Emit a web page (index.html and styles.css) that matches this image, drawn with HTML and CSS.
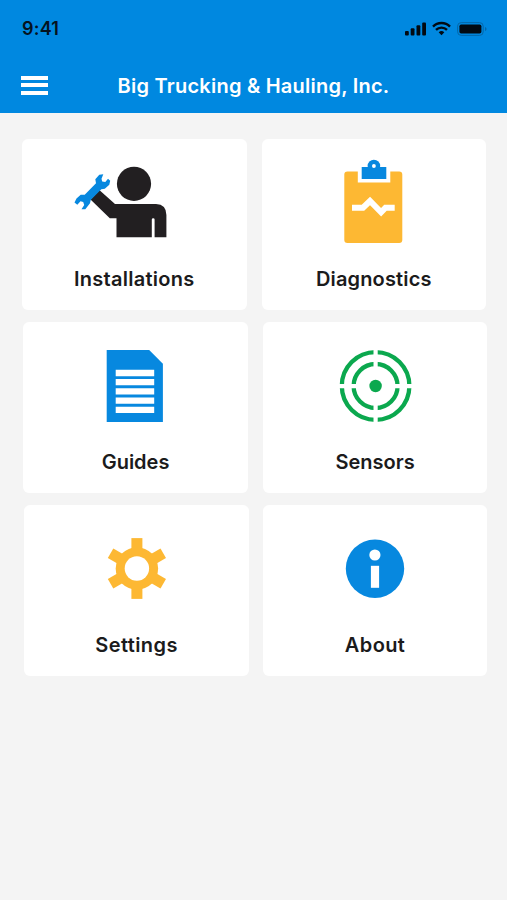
FILE: index.html
```html
<!DOCTYPE html>
<html lang="en">
<head>
<meta charset="utf-8">
<title>Big Trucking &amp; Hauling, Inc.</title>
<link rel="stylesheet" href="styles.css">
</head>
<body>
<header class="header">
  <div class="status">
    <span class="time">9:41</span>
    <svg class="indicators" viewBox="404 20 84 18">
      <rect x="405" y="31" width="3.8" height="4.6" rx="1"/>
      <rect x="410.7" y="28.3" width="3.8" height="7.3" rx="1"/>
      <rect x="416.5" y="25.3" width="3.8" height="10.3" rx="1"/>
      <rect x="422.2" y="22.5" width="3.8" height="13.1" rx="1"/>
      <g class="wave">
        <path d="M433 26.6a12 12 0 0 1 17 0"/>
        <path d="M436 29.9a7.8 7.8 0 0 1 11 0"/>
      </g>
      <path d="M438.7 32.3a4.2 4.2 0 0 1 5.6 0L441.5 35.3z"/>
      <rect class="shell" x="457.6" y="22.6" width="25.6" height="12.8" rx="3.6"/>
      <rect x="459.4" y="24.4" width="22" height="9.2" rx="1.8"/>
      <path class="cap" d="M485 27v4q1.6-.6 1.6-2T485 27z"/>
    </svg>
  </div>
  <div class="bar">
    <button class="menu" aria-label="Menu"><span></span><span></span><span></span></button>
    <h1 class="title">Big Trucking &amp; Hauling, Inc.</h1>
  </div>
</header>
<main class="rows">
  <div class="row row-first">
    <a class="card">
      <svg class="icon" viewBox="22 139 224 120">
        <g class="ink">
          <circle cx="134" cy="183.8" r="17.1"/>
          <path d="M99.3 190L115 204H156Q166.4 204.4 166.4 215V237.2H154.6V219.5Q154.6 218.2 153.2 218.2T151.8 219.5V237.2H116.5V218.3H109.8L90.5 199.5z"/>
        </g>
        <path class="blue" d="M84.700 194.700L96 183.300L95.300 179.300L99.300 174.700L103.300 174.300L101.500 178.700L102.200 181.500L105.300 182L108 178.800L110.200 180.700L109.300 184.700L104.800 188.800L101.300 189.300L90.700 200L90 203.300L85.300 209.300L81.500 209.200L84.200 205L83.200 202L80.500 201.300L77.300 204.700L74.500 202.500L76.500 198.500L80.700 194.700z"/>
      </svg>
      <span class="label spaced">Installations</span>
    </a>
    <a class="card">
      <svg class="icon" viewBox="262 139 224 120">
        <path class="amber" d="M347.400 171.500H357.800V182.500H390.300V171.500H399.200Q402.300 171.500 402.300 174.600V240Q402.300 243 399.200 243H347.400Q344.300 243 344.300 240V174.600Q344.300 171.500 347.400 171.500z"/>
        <circle class="blue" cx="373.900" cy="166" r="6.300"/>
        <rect class="blue" x="361.700" y="167" width="24.600" height="12"/>
        <circle class="white" cx="373.900" cy="166" r="1.900"/>
        <path class="pulse" d="M352 207.700H363L370 201L381.100 212.300L385.500 207.700H394.700"/>
      </svg>
      <span class="label spaced-slight">Diagnostics</span>
    </a>
  </div>
  <div class="row row-second">
    <a class="card">
      <svg class="icon" viewBox="23.300 322 224 120">
        <path class="blue" d="M107 350H149.500L163.200 363.700V422H107z"/>
        <path class="white" d="M116 369.700h38.500v6.500H116zM116 379h38.500v6.300H116zM116 388.200h38.500v6.300H116zM116 397.400h38.500v6.400H116zM116 406.700h38.500v6.400H116z"/>
      </svg>
      <span class="label">Guides</span>
    </a>
    <a class="card">
      <svg class="icon" viewBox="262.700 322 224 120">
        <circle class="ring" cx="375.300" cy="386" r="33.800"/>
        <circle class="ring" cx="375.300" cy="386" r="22"/>
        <path class="white" d="M373.200 348h4.200v76h-4.200zM337 384h77v4.200h-77z"/>
        <circle class="green" cx="375.300" cy="386" r="6.200"/>
      </svg>
      <span class="label">Sensors</span>
    </a>
  </div>
  <div class="row row-third">
    <a class="card">
      <svg class="icon" viewBox="24.300 505 224 120">
        <g class="amber" transform="translate(137.200 568.500)">
          <circle r="21.200"/>
          <rect x="-5.500" y="-30.400" width="11" height="60.800"/>
          <rect x="-5.500" y="-30.400" width="11" height="60.800" transform="rotate(60)"/>
          <rect x="-5.500" y="-30.400" width="11" height="60.800" transform="rotate(120)"/>
        </g>
        <circle class="white" cx="137.200" cy="568.500" r="12.200"/>
      </svg>
      <span class="label spaced-wide">Settings</span>
    </a>
    <a class="card">
      <svg class="icon" viewBox="262.700 505 224 120">
        <circle class="blue" cx="374.700" cy="568.700" r="29.200"/>
        <circle class="white" cx="374.600" cy="555" r="5.600"/>
        <rect class="white" x="370.600" y="565.800" width="8.200" height="22"/>
      </svg>
      <span class="label spaced-wide">About</span>
    </a>
  </div>
</main>
</body>
</html>
```
FILE: styles.css
```css
* { box-sizing: border-box; }
body {
  margin: 0;
  min-height: 900px;
  background: #f4f4f4;
  color: #1b1b1c;
  font-family: Inter, "Liberation Sans", sans-serif;
}
.header { height: 113px; background: #0088e0; }
.status {
  display: flex;
  justify-content: space-between;
  padding: 20px 19px 0 22px;
  height: 58px;
}
.time {
  color: #05131f;
  font-size: 18px;
  font-weight: 600;
  letter-spacing: 0.2px;
  line-height: 18px;
}
.indicators { width: 84px; height: 18px; fill: #020a12; }
.wave { fill: none; stroke: #020a12; stroke-width: 2.4; }
.shell { fill: none; stroke: #0467a8; stroke-width: 1; }
.cap { fill: #0467a8; }
.bar {
  display: grid;
  grid-template-columns: 27px 1fr 27px;
  align-items: center;
  height: 55px;
  padding: 0 21px;
}
.menu {
  display: grid;
  gap: 3.5px;
  padding: 0 0 1px;
  border: 0;
  background: none;
}
.menu span { height: 4px; background: #fff; }
.title {
  margin: 0;
  color: #fff;
  font-size: 20px;
  font-weight: 600;
  letter-spacing: 0.24px;
  line-height: 24px;
  text-align: center;
  white-space: nowrap;
}
.rows { display: grid; gap: 12px; padding-top: 26px; }
.row { display: flex; justify-content: space-between; }
.row-first { padding: 0 21px 0 22px; }
.row-second { padding: 0 19.7px 0 23.3px; }
.row-third { padding: 0 19.7px 0 24.3px; }
.card {
  width: 224.5px;
  height: 171px;
  border-radius: 6px;
  background: #fff;
  text-align: center;
}
.icon { display: block; width: 224px; height: 120px; }
.label {
  display: block;
  margin-top: 8px;
  font-size: 20px;
  font-weight: 600;
  line-height: 24px;
}
.spaced { letter-spacing: 0.27px; }
.spaced-slight { letter-spacing: 0.15px; }
.spaced-wide { letter-spacing: 0.4px; }
.ink { fill: #221f21; }
.blue { fill: #0788df; }
.amber { fill: #fdb833; }
.green { fill: #0ba84e; }
.white { fill: #fff; }
.ring { fill: none; stroke: #0ba84e; stroke-width: 4.3; }
.pulse { fill: none; stroke: #fff; stroke-width: 6; }
```
